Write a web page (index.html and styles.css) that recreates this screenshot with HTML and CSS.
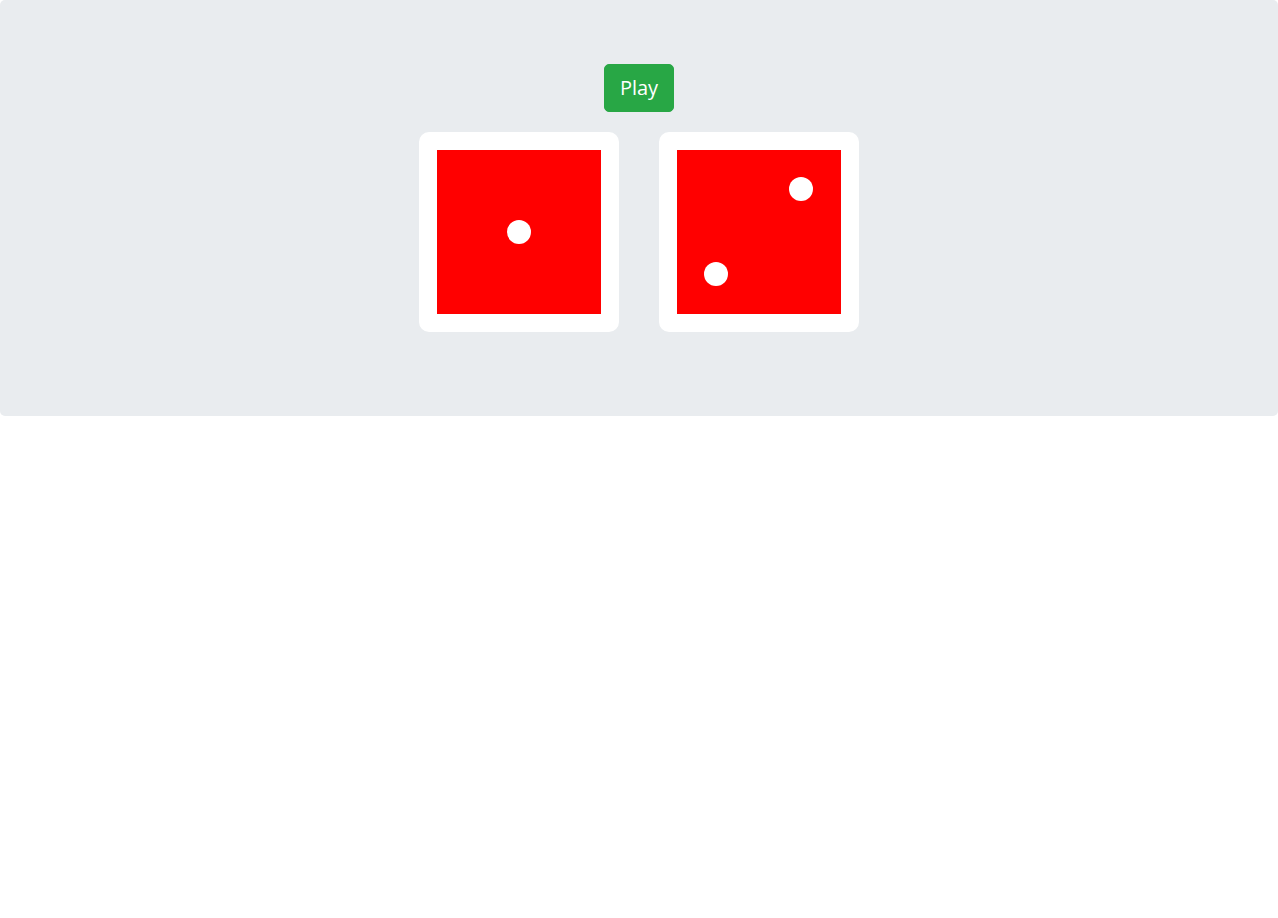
FILE: index.html
```html
<!DOCTYPE html>
<html>
<head>
<meta charset="utf-8">
<title>Dice</title>
<link rel="stylesheet" href="styles.css">
</head>
<body>
<div class="jumbotron">
  <button class="btn-play">Play</button>
  <div class="dice-row">
    <div class="die">
      <span class="pip pip-center"></span>
    </div>
    <div class="die">
      <span class="pip pip-top-right"></span>
      <span class="pip pip-bottom-left"></span>
    </div>
  </div>
</div>
</body>
</html>
```

FILE: styles.css
```css
html, body {
  margin: 0;
  padding: 0;
  background: #ffffff;
  font-family: "Open Sans", "Noto Sans", "Liberation Sans", sans-serif;
}

.jumbotron {
  background: #e9ecef;
  border-radius: 5px;
  padding: 64px 32px;
  height: 288px;
  display: flex;
  flex-direction: column;
  align-items: center;
  gap: 19.5px;
}

.btn-play {
  width: 70px;
  height: 48px;
  padding: 0;
  background: #28a745;
  border: 1px solid #28a745;
  border-radius: 5px;
  color: #ffffff;
  font-family: "Open Sans", "Noto Sans", sans-serif;
  font-size: 20px;
  line-height: 46px;
  text-align: center;
  cursor: pointer;
}

.dice-row {
  display: flex;
  gap: 40px;
}

.die {
  position: relative;
  width: 164px;
  height: 164px;
  background: #ff0000;
  border: 18px solid #ffffff;
  border-radius: 10px;
}

.pip {
  position: absolute;
  width: 24px;
  height: 24px;
  border-radius: 50%;
  background: #ffffff;
}

.pip-center {
  left: 70px;
  top: 70px;
}

.pip-top-right {
  left: 112px;
  top: 27px;
}

.pip-bottom-left {
  left: 27px;
  top: 112px;
}
```
